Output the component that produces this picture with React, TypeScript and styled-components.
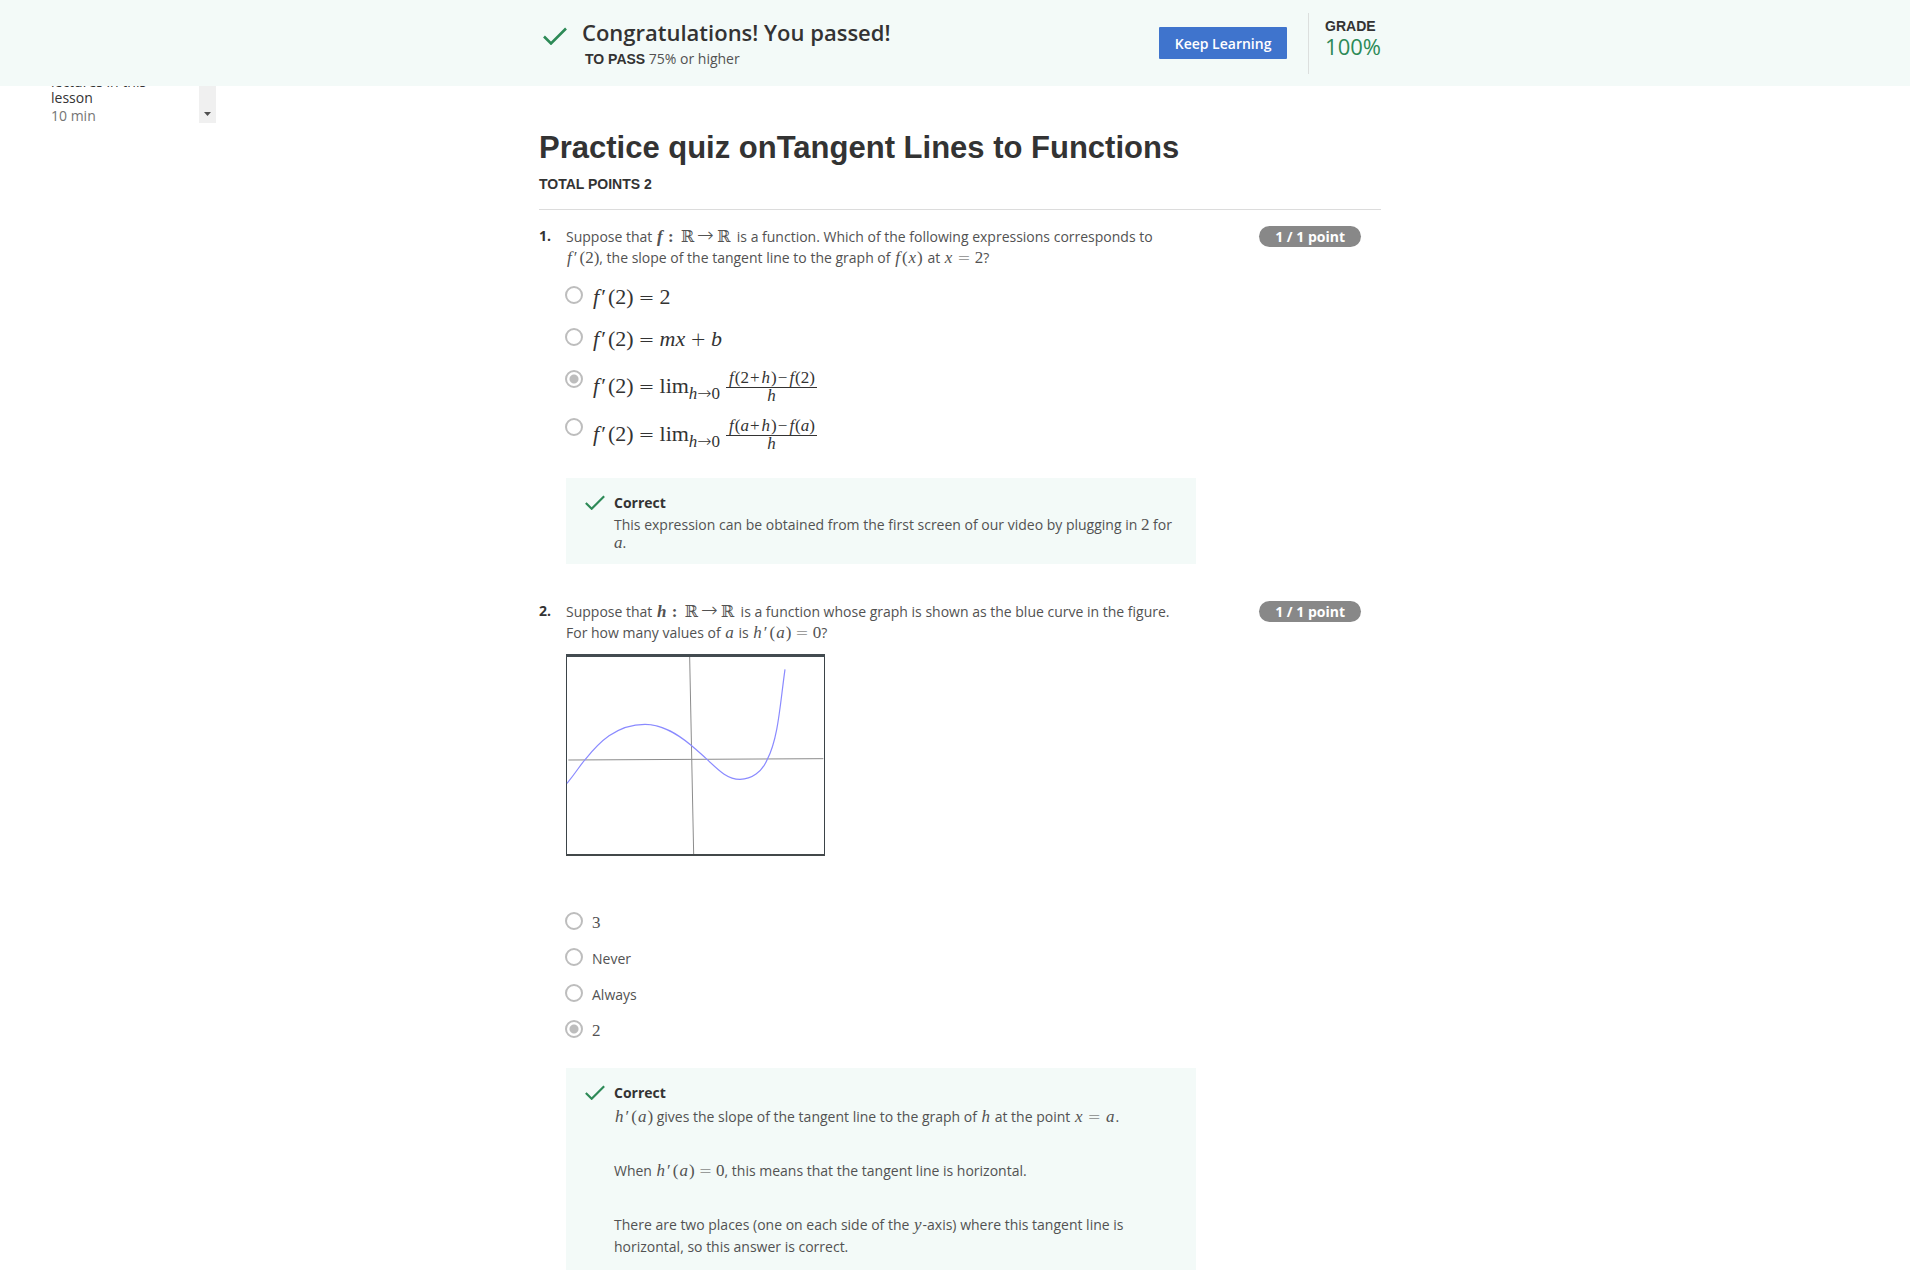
import React from "react";
import styled, { createGlobalStyle } from "styled-components";

const GlobalStyle = createGlobalStyle`
  *, *::before, *::after { box-sizing: border-box; }
  body {
    margin: 0;
    background: #fff;
    color: #525252;
    font-family: "Open Sans", "Noto Sans", sans-serif;
    font-size: 14px;
    line-height: 21px;
  }
  h1, h2, h3, p, ol, fieldset { margin: 0; padding: 0; border: 0; }
`;

const sans = `"Liberation Sans", Arial, sans-serif`;
const serif = `"Liberation Serif", "Times New Roman", serif`;

const Columns = styled.div`
  display: grid;
  grid-template-columns: 1fr minmax(0, 842px) 1fr;
  padding-left: 10px;
`;

const Banner = styled.header`
  position: sticky;
  top: 0;
  z-index: 1;
  background: #f3faf8;
`;

const BannerRow = styled.div`
  grid-column: 2;
  display: flex;
  align-items: center;
  height: 86px;
`;

const BannerCheck = styled.svg`
  flex: none;
  width: 24px;
  height: 18px;
  margin: 0 15px 14px 4px;
`;

const BannerText = styled.div`
  flex: 1;
`;

const BannerTitle = styled.h2`
  padding-bottom: 2px;
  color: #333;
  font-size: 22px;
  font-weight: 600;
  line-height: 30px;
`;

const PassLine = styled.p`
  padding-left: 3px;
  line-height: 20px;
`;

const Caps = styled.span`
  color: #333;
  font-family: ${sans};
  font-weight: 700;
  text-transform: uppercase;
`;

const KeepLearning = styled.button`
  min-width: 128px;
  height: 32px;
  padding: 0 15px;
  border: 0;
  border-radius: 1px;
  background: #3f74cd;
  color: #fff;
  font: 600 14px "Open Sans", "Noto Sans", sans-serif;
  cursor: pointer;
`;

const Grade = styled.div`
  display: flex;
  flex-direction: column;
  justify-content: center;
  height: 61px;
  margin-left: 21px;
  padding: 0 0 10px 16px;
  border-left: 1px solid #dcdfde;
`;

const GradeLabel = styled(Caps)`
  line-height: 16px;
`;

const GradeValue = styled.span`
  color: #2d8a57;
  font-size: 22px;
  line-height: 24px;
`;

const Sidebar = styled.aside`
  display: flex;
  align-items: flex-start;
  justify-content: space-between;
  width: 206px;
  height: 39px;
  padding-left: 41px;
  overflow: hidden;
`;

const Lesson = styled.a`
  display: flex;
  flex-direction: column;
  justify-content: flex-end;
  width: 96px;
  height: 39px;
  color: #333;
  line-height: 16px;
  text-decoration: none;
`;

const Duration = styled.span`
  color: #757575;
  line-height: 19px;
`;

const ScrollDown = styled.button`
  display: flex;
  align-items: flex-end;
  justify-content: center;
  width: 17px;
  height: 37px;
  padding: 0 0 7px;
  border: 0;
  background: #f0f0f0;
`;

const Main = styled.main`
  grid-column: 2;
  padding: 42px 0 10px;
`;

const QuizHead = styled.div`
  padding-bottom: 15px;
  border-bottom: 1px solid #dcdcdc;
`;

const QuizTitle = styled.h1`
  margin-bottom: 6px;
  color: #333;
  font-family: ${sans};
  font-size: 31px;
  font-weight: 700;
  line-height: 40px;
`;

const TotalPoints = styled(Caps)`
  display: block;
  line-height: 20px;
`;

const Questions = styled.ol`
  display: flex;
  flex-direction: column;
  gap: 37px;
  margin-top: 16px;
  list-style: none;
`;

const QuestionItem = styled.li`
  display: grid;
  grid-template-columns: 27px minmax(0, 630px) 1fr;
  align-items: start;
`;

const Number = styled.span`
  color: #333;
  font-weight: 700;
  line-height: 19px;
`;

const Prompt = styled.p`
  padding-right: 20px;
`;

const Badge = styled.span`
  justify-self: end;
  margin-right: 20px;
  padding: 0 16px;
  border-radius: 11px;
  background: #888;
  color: #fff;
  font-weight: 700;
`;

const Figure = styled.svg`
  display: block;
  width: 259px;
  height: 202px;
  margin: 11px 0 54px;
`;

const Options = styled.fieldset`
  display: flex;
  flex-direction: column;
  gap: 12px;
  margin: 16px 0 26px;
`;

const OptionLabel = styled.label<{ $tall?: boolean }>`
  display: flex;
  align-items: flex-start;
  min-height: ${(p) => (p.$tall ? 30 : 24)}px;
  color: ${(p) => (p.$tall ? "#333" : "#525252")};
`;

const Radio = styled.input`
  appearance: none;
  flex: none;
  width: 18px;
  height: 18px;
  margin: 2px 9px 0 -1px;
  border: 2px solid #bdbdbd;
  border-radius: 50%;
  background: #fff;
  &:checked {
    background: radial-gradient(circle, #bdbdbd 4px, #fff 5px);
  }
`;

const OptionText = styled.span`
  padding-top: 2px;
`;

const Feedback = styled.section`
  display: grid;
  grid-template-columns: 48px 1fr;
  padding: 14px 16px 12px 0;
  background: #f3faf8;
`;

const FeedbackCheck = styled.svg`
  width: 20px;
  height: 15px;
  margin: 3px 0 0 19px;
`;

const FeedbackTitle = styled.h3`
  margin-bottom: 2px;
  color: #333;
  font-size: 14px;
  font-weight: 700;
  line-height: 22px;
`;

const FeedbackBody = styled.div<{ $line: number }>`
  display: flex;
  flex-direction: column;
  gap: 32px;
  line-height: ${(p) => p.$line}px;
`;

const MathText = styled.span`
  font-family: ${serif};
  font-size: 17px;
  line-height: 0;
  white-space: nowrap;
`;

const MathLine = styled.span`
  font-family: ${serif};
  font-size: 22px;
  line-height: 22px;
  white-space: nowrap;
`;

const FractionLine = styled(MathLine)`
  display: flex;
  align-items: center;
`;

const Var = styled.i`
  margin: 0 1px;
`;

const Argument = styled.span`
  margin: 0 1px;
`;

const Symbol = styled.span<{ $large?: boolean }>`
  margin: 0 ${(p) => (p.$large ? 5 : 4)}px;
  font-family: "DejaVu Sans Light", "DejaVu Sans", sans-serif;
  font-size: ${(p) => (p.$large ? 19 : 16)}px;
  font-weight: 200;
  line-height: 0;
`;

const Arrow = styled.span<{ $size: number }>`
  font-family: "DejaVu Sans Light", "DejaVu Sans", sans-serif;
  font-size: ${(p) => p.$size}px;
  font-weight: 200;
  line-height: 0;
`;

const Reals = styled.span`
  margin: 0 3px;
  font-family: "DejaVu Serif", "DejaVu Sans", serif;
  font-size: 16px;
  line-height: 0;
`;

const PrimeMark = styled.span`
  margin: 0 2px 0 1px;
`;

const Sub = styled.span`
  position: relative;
  top: 6px;
  margin-right: 6px;
  font-size: 17px;
  line-height: 0;
`;

const Fraction = styled.span`
  display: inline-flex;
  flex-direction: column;
  align-items: center;
  font-size: 17px;
`;

const Numerator = styled.span`
  padding: 0 2px;
  border-bottom: 1px solid #333;
  line-height: 19px;
`;

const Denominator = styled.span`
  line-height: 16px;
`;

const Sign = styled.span`
  margin: 0 1px;
`;

const Eq = ({ large }: { large?: boolean }) => <Symbol $large={large}>=</Symbol>;

const Maps = ({ name }: { name: string }) => (
  <MathText>
    <b><Var>{name}</Var> :</b> <Reals>ℝ</Reals><Arrow $size={20}>→</Arrow><Reals>ℝ</Reals>
  </MathText>
);

const Prime = ({ name, arg }: { name: string; arg: React.ReactNode }) => (
  <><Var>{name}</Var><PrimeMark>′</PrimeMark>({arg})</>
);

const A = () => <Var>a</Var>;

const CheckPath = () => (
  <path d="M1 9.5 8 16.5 23 1.5" fill="none" stroke="#2d8a57" strokeWidth="2.6" />
);

const LimitExpression = ({ at }: { at: React.ReactNode }) => (
  <FractionLine>
    <span>
      <Prime name="f" arg="2" /><Eq large />lim<Sub><i>h</i><Arrow $size={17}>→</Arrow>0</Sub>
    </span>
    <Fraction>
      <Numerator>
        <Var>f</Var>({at}<Sign>+</Sign><Var>h</Var>)<Sign>−</Sign><Var>f</Var>({at})
      </Numerator>
      <Denominator><i>h</i></Denominator>
    </Fraction>
  </FractionLine>
);

type OptionProps = {
  group: string;
  value: string;
  checked?: boolean;
  tall?: boolean;
  children: React.ReactNode;
};

const Option = ({ group, value, checked, tall, children }: OptionProps) => (
  <OptionLabel $tall={tall}>
    <Radio type="radio" name={group} value={value} defaultChecked={checked} />
    {children}
  </OptionLabel>
);

const Correct = ({ line, children }: { line: number; children: React.ReactNode }) => (
  <Feedback>
    <FeedbackCheck viewBox="0 0 24 18" aria-hidden="true"><CheckPath /></FeedbackCheck>
    <div>
      <FeedbackTitle>Correct</FeedbackTitle>
      <FeedbackBody $line={line}>{children}</FeedbackBody>
    </div>
  </Feedback>
);

const Question = ({ number, children }: { number: number; children: React.ReactNode }) => (
  <QuestionItem>
    <Number>{number}.</Number>
    <div>{children}</div>
    <Badge>1 / 1 point</Badge>
  </QuestionItem>
);

const Graph = () => (
  <Figure viewBox="108 48 777 606" preserveAspectRatio="none" role="img" aria-label="Graph of h">
    <path d="M109.5 48V654M883.5 48V654" stroke="#3b4348" strokeWidth="3" />
    <path d="M108 52.5H885" stroke="#434b50" strokeWidth="9" />
    <path d="M108 651H885" stroke="#43484a" strokeWidth="6" />
    <path d="M115 366 880 362M479 57 491 648" stroke="#8c8c8c" strokeWidth="3" />
    <path
      d="M111 436C140 401 150 382 166 364C205 316 257 259 345 259C399 259 445 290 485 323C500 335 515 350 531 364C567 398 592 424 630 424C665 424 696 402 712 364C745 300 750 200 765 94"
      fill="none"
      stroke="#8a8aff"
      strokeWidth="3.6"
    />
  </Figure>
);

export default function App() {
  return (
    <>
      <GlobalStyle />
      <Banner>
        <Columns>
          <BannerRow>
            <BannerCheck viewBox="0 0 24 18" aria-hidden="true"><CheckPath /></BannerCheck>
            <BannerText>
              <BannerTitle>Congratulations! You passed!</BannerTitle>
              <PassLine><Caps>To pass</Caps> 75% or higher</PassLine>
            </BannerText>
            <KeepLearning type="button">Keep Learning</KeepLearning>
            <Grade>
              <GradeLabel>Grade</GradeLabel>
              <GradeValue>100%</GradeValue>
            </Grade>
          </BannerRow>
        </Columns>
      </Banner>
      <Columns>
        <Sidebar>
          <Lesson href="#lesson">
            <span>lectures in this lesson</span>
            <Duration>10 min</Duration>
          </Lesson>
          <ScrollDown type="button" aria-label="Scroll down">
            <svg width="7" height="4" viewBox="0 0 7 4"><path d="M0 0H7L3.5 4Z" fill="#505050" /></svg>
          </ScrollDown>
        </Sidebar>
        <Main>
          <QuizHead>
            <QuizTitle>Practice quiz onTangent Lines to Functions</QuizTitle>
            <TotalPoints>Total points 2</TotalPoints>
          </QuizHead>
          <Questions>
            <Question number={1}>
              <Prompt>
                Suppose that <Maps name="f" /> is a function. Which of the following expressions
                corresponds to <MathText><Prime name="f" arg="2" /></MathText>, the slope of the
                tangent line to the graph of{" "}
                <MathText><Var>f</Var><Argument>(<Var>x</Var>)</Argument></MathText> at{" "}
                <MathText><Var>x</Var><Eq />2</MathText>?
              </Prompt>
              <Options>
                <Option group="q1" value="a" tall>
                  <OptionText><MathLine><Prime name="f" arg="2" /><Eq large />2</MathLine></OptionText>
                </Option>
                <Option group="q1" value="b" tall>
                  <OptionText>
                    <MathLine>
                      <Prime name="f" arg="2" /><Eq large /><i>mx</i><Symbol $large>+</Symbol><i>b</i>
                    </MathLine>
                  </OptionText>
                </Option>
                <Option group="q1" value="c" tall checked><LimitExpression at="2" /></Option>
                <Option group="q1" value="d" tall><LimitExpression at={<i>a</i>} /></Option>
              </Options>
              <Correct line={18}>
                <p>
                  This expression can be obtained from the first screen of our video by plugging in{" "}
                  <MathText>2</MathText> for <MathText><i>a</i></MathText>.
                </p>
              </Correct>
            </Question>
            <Question number={2}>
              <Prompt>
                Suppose that <Maps name="h" /> is a function whose graph is shown as the blue curve
                in the figure. For how many values of <MathText><A /></MathText> is{" "}
                <MathText><Prime name="h" arg={<A />} /><Eq />0</MathText>?
              </Prompt>
              <Graph />
              <Options>
                <Option group="q2" value="3"><OptionText><MathText>3</MathText></OptionText></Option>
                <Option group="q2" value="never"><OptionText>Never</OptionText></Option>
                <Option group="q2" value="always"><OptionText>Always</OptionText></Option>
                <Option group="q2" value="2" checked><OptionText><MathText>2</MathText></OptionText></Option>
              </Options>
              <Correct line={22}>
                <p>
                  <MathText><Prime name="h" arg={<A />} /></MathText> gives the slope of the tangent
                  line to the graph of <MathText><Var>h</Var></MathText> at the point{" "}
                  <MathText><Var>x</Var><Eq /><A /></MathText>.
                </p>
                <p>
                  When <MathText><Prime name="h" arg={<A />} /><Eq />0</MathText>, this means that
                  the tangent line is horizontal.
                </p>
                <p>
                  There are two places (one on each side of the <MathText><Var>y</Var></MathText>-axis)
                  where this tangent line is horizontal, so this answer is correct.
                </p>
              </Correct>
            </Question>
          </Questions>
        </Main>
      </Columns>
    </>
  );
}
